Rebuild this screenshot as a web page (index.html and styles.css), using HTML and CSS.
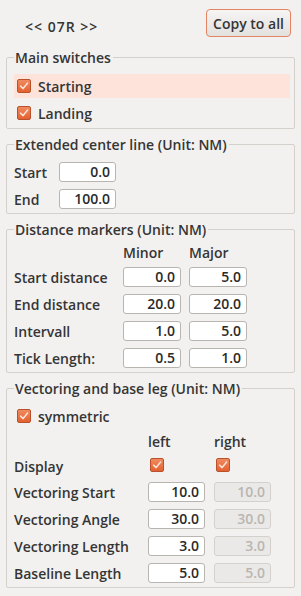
FILE: index.html
```html
<!DOCTYPE html>
<html lang="en">
<head>
    <meta charset="UTF-8">
    <title>Runway settings</title>
    <link rel="stylesheet" href="styles.css">
</head>
<body>
    <div class="top-bar">
        <span class="runway-nav">&lt;&lt; 07R &gt;&gt;</span>
        <button class="copy-btn">Copy to all</button>
    </div>

    <fieldset class="group group-main">
        <legend>Main switches</legend>
        <label class="check-row hover"><span class="check"><svg viewBox="0 0 14 14"><path d="M3 7.2 L6 10 L11.2 3.6" /></svg></span>Starting</label>
        <label class="check-row"><span class="check"><svg viewBox="0 0 14 14"><path d="M3 7.2 L6 10 L11.2 3.6" /></svg></span>Landing</label>
    </fieldset>

    <fieldset class="group group-center">
        <legend>Extended center line (Unit: NM)</legend>
        <div class="grid grid-center">
            <span>Start</span><span class="field">0.0</span>
            <span>End</span><span class="field">100.0</span>
        </div>
    </fieldset>

    <fieldset class="group group-markers">
        <legend>Distance markers (Unit: NM)</legend>
        <div class="grid grid-markers">
            <span></span><span class="head">Minor</span><span class="head">Major</span>
            <span>Start distance</span><span class="field">0.0</span><span class="field">5.0</span>
            <span>End distance</span><span class="field">20.0</span><span class="field">20.0</span>
            <span>Intervall</span><span class="field">1.0</span><span class="field">5.0</span>
            <span>Tick Length:</span><span class="field">0.5</span><span class="field">1.0</span>
        </div>
    </fieldset>

    <fieldset class="group group-vector">
        <legend>Vectoring and base leg (Unit: NM)</legend>
        <label class="check-row sym"><span class="check"><svg viewBox="0 0 14 14"><path d="M3 7.2 L6 10 L11.2 3.6" /></svg></span>symmetric</label>
        <div class="grid grid-vector">
            <span></span><span class="head">left</span><span class="head">right</span>
            <span>Display</span>
            <span class="cell-check"><span class="check"><svg viewBox="0 0 14 14"><path d="M3 7.2 L6 10 L11.2 3.6" /></svg></span></span>
            <span class="cell-check"><span class="check"><svg viewBox="0 0 14 14"><path d="M3 7.2 L6 10 L11.2 3.6" /></svg></span></span>
            <span>Vectoring Start</span><span class="field">10.0</span><span class="field off">10.0</span>
            <span>Vectoring Angle</span><span class="field">30.0</span><span class="field off">30.0</span>
            <span>Vectoring Length</span><span class="field">3.0</span><span class="field off">3.0</span>
            <span>Baseline Length</span><span class="field">5.0</span><span class="field off">5.0</span>
        </div>
    </fieldset>
</body>
</html>
```

FILE: styles.css
```css
body {
    margin: 0;
    padding: 0 6px;
    background: #f2f1f0;
    color: #353535;
    font-family: "Open Sans", "DejaVu Sans", sans-serif;
    font-size: 14px;
}
.top-bar {
    display: flex;
    justify-content: space-between;
    align-items: flex-start;
    padding: 9px 0 0 19px;
    height: 40px;
}
.runway-nav {
    margin-top: 8px;
    font-weight: 600;
    letter-spacing: 1px;
}
.copy-btn {
    height: 28px;
    width: 85px;
    margin-right: 4px;
    padding: 0;
    font-family: inherit;
    font-size: 14px;
    font-weight: 600;
    color: #353535;
    border: 1px solid #e38563;
    border-radius: 4px;
    background: linear-gradient(#f6f5f4, #e3e1de);
}
.group {
    margin: 0 0 7px 0;
    padding: 0 4px 2px 7px;
    border: 1px solid #d4d1cd;
    border-radius: 2px;
}
.group legend {
    padding: 0 2px 0 1px;
    height: 17px;
    line-height: 17px;
    font-weight: 600;
}
.check-row {
    display: flex;
    align-items: center;
    height: 24px;
    padding-left: 3px;
    font-weight: 600;
}
.check-row.hover {
    background: #fde3da;
    margin-top: 8px;
    margin-bottom: 3px;
}
.group-main .check-row + .check-row {
    margin-bottom: 1px;
}
.check {
    display: inline-block;
    width: 14px;
    height: 14px;
    margin-right: 7px;
    box-sizing: border-box;
    border: 1px solid #b8522c;
    border-radius: 2px;
    background: linear-gradient(#f08a60, #e4612f);
}
.check svg {
    display: block;
    width: 12px;
    height: 12px;
    fill: none;
    stroke: #fbe2d6;
    stroke-width: 1.8;
    stroke-linecap: round;
    stroke-linejoin: round;
}
.grid {
    display: grid;
    align-items: center;
    row-gap: 7px;
    font-weight: 600;
}
.grid-center {
    grid-template-columns: 45px 57px;
    grid-auto-rows: 20px;
    padding-top: 9px;
    padding-bottom: 2px;
}
.grid-markers {
    grid-template-columns: 101px 58px 58px;
    column-gap: 8px;
    grid-template-rows: 16px;
    grid-auto-rows: 20px;
    padding-top: 6px;
    padding-bottom: 2px;
}
.grid-vector {
    grid-template-columns: 125px 57px 57px;
    column-gap: 9px;
    grid-template-rows: 18px 18px;
    grid-auto-rows: 20px;
    padding-bottom: 2px;
}
.field {
    box-sizing: border-box;
    height: 20px;
    line-height: 18px;
    padding-right: 5px;
    text-align: right;
    background: #fff;
    border: 1px solid #b8b4b0;
    border-radius: 3px;
    color: #2a2a2a;
}
.field.off {
    background: #ebe9e7;
    border-color: #d4d1cd;
    color: #b9b6b2;
}
.sym {
    margin-top: 7px;
    margin-bottom: 4px;
}
.cell-check {
    padding-left: 2px;
}
.cell-check .check {
    margin: 0;
}
```
